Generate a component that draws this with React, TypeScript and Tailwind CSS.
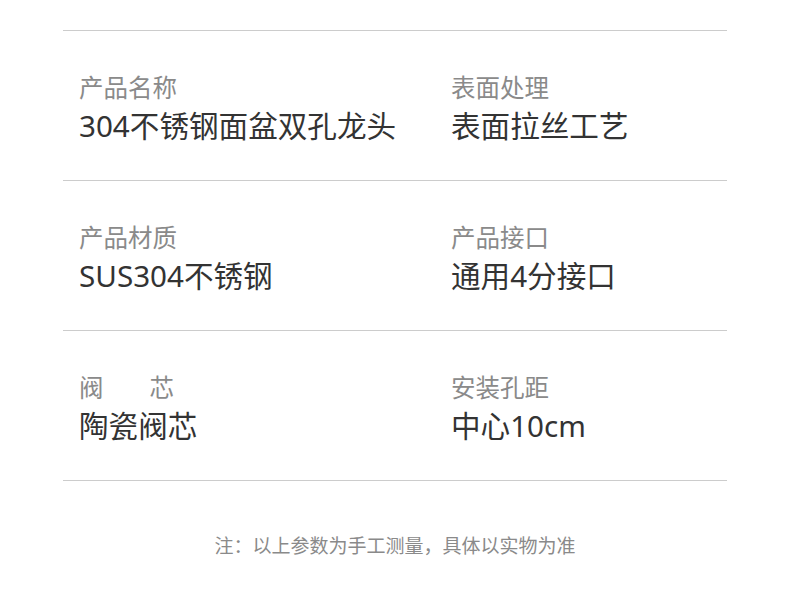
import React from 'react';

type Spec = { label: React.ReactNode; value: string };

const rows: [Spec, Spec][] = [
  [
    { label: '产品名称', value: '304不锈钢面盆双孔龙头' },
    { label: '表面处理', value: '表面拉丝工艺' },
  ],
  [
    { label: '产品材质', value: 'SUS304不锈钢' },
    { label: '产品接口', value: '通用4分接口' },
  ],
  [
    {
      label: (
        <span className="flex w-[95px] justify-between">
          <span>阀</span>
          <span>芯</span>
        </span>
      ),
      value: '陶瓷阀芯',
    },
    { label: '安装孔距', value: '中心10cm' },
  ],
];

const Cell: React.FC<{ spec: Spec; className?: string }> = ({ spec, className }) => (
  <div className={`pt-[41px] ${className ?? ''}`}>
    <div className="text-[24.5px] leading-[32px] text-[#8a8a8a]">{spec.label}</div>
    <div className="mt-[3px] text-[29.6px] leading-[38px] text-[#333333]">{spec.value}</div>
  </div>
);

export default function App() {
  return (
    <div
      className="w-[790px] h-[600px] bg-white overflow-hidden"
      style={{ fontFamily: '"Noto Sans", "Noto Sans CJK SC", sans-serif' }}
    >
      <div className="mx-[63px] mt-[30px] border-t border-[#cccccc]">
        {rows.map((pair, i) => (
          <div key={i} className="flex h-[150px] border-b border-[#cccccc] px-4">
            <Cell spec={pair[0]} className="w-[372px] shrink-0" />
            <Cell spec={pair[1]} />
          </div>
        ))}
      </div>
      <p className="mt-[53px] text-center text-[19px] leading-[24px] text-[#8a8a8a]">
        注：以上参数为手工测量，具体以实物为准
      </p>
    </div>
  );
}
